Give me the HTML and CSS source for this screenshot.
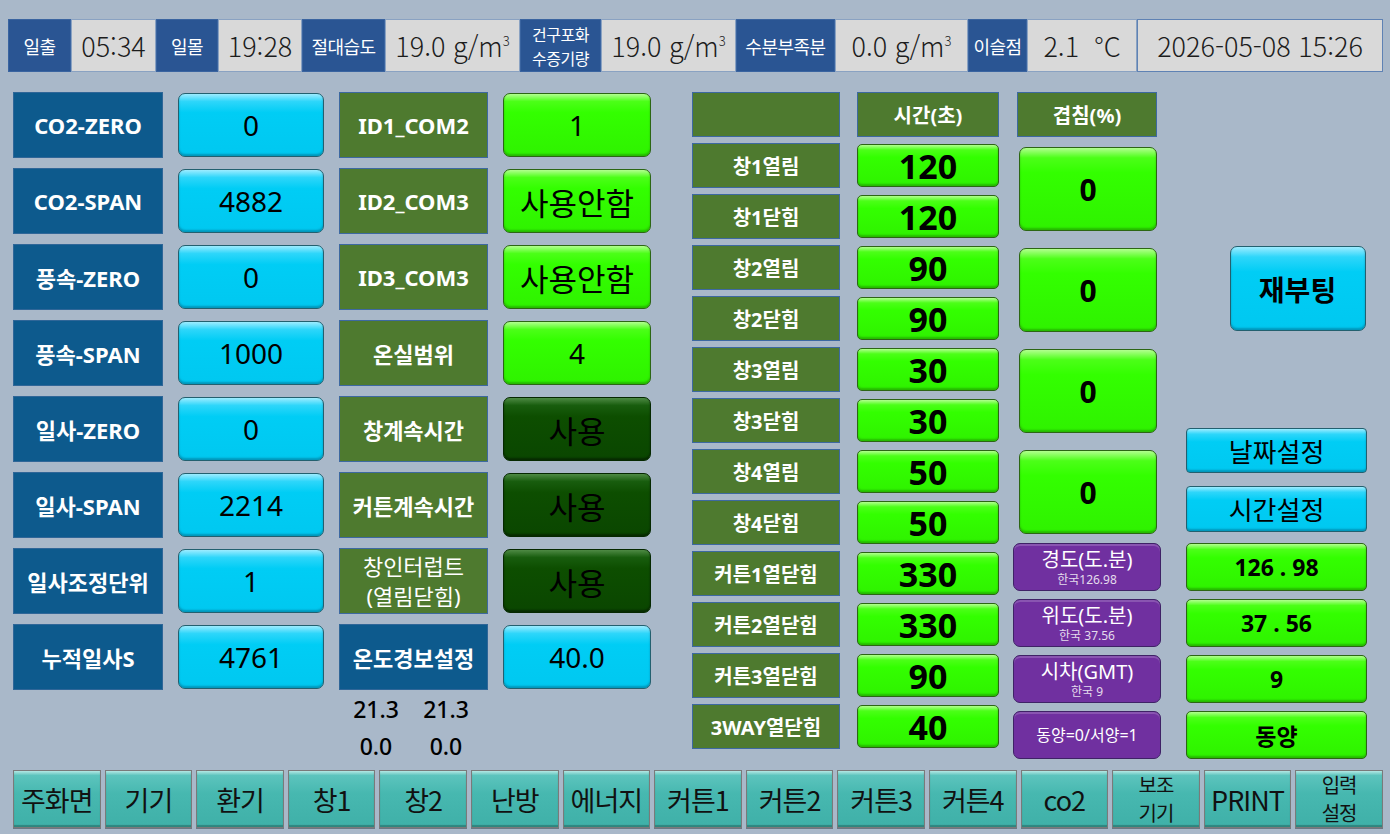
FILE: index.html
```html
<!DOCTYPE html>
<html lang="ko">
<head>
    <meta charset="UTF-8">
    <meta name="viewport" content="width=device-width, initial-scale=1.0">
    <title>환경 설정</title>
    <link rel="stylesheet" href="styles.css">
</head>
<body>
    <!-- 상단 기상 정보 표시줄 -->
    <div class="status-bar">
        <div class="st-label">일출</div>
        <div class="st-value">05:34</div>
        <div class="st-label">일몰</div>
        <div class="st-value">19:28</div>
        <div class="st-label">절대습도</div>
        <div class="st-value">19.0 g/m<sup>3</sup></div>
        <div class="st-label st-two">건구포화<br>수증기량</div>
        <div class="st-value">19.0 g/m<sup>3</sup></div>
        <div class="st-label">수분부족분</div>
        <div class="st-value">0.0 g/m<sup>3</sup></div>
        <div class="st-label">이슬점</div>
        <div class="st-value">2.1 &nbsp;°C</div>
        <div class="st-value st-clock">2026-05-08 15:26</div>
    </div>

    <div class="main">
        <!-- 센서 보정 / 통신 설정 -->
        <div class="setup">
            <div class="setup-grid">
                <div class="tag tag-blue">CO2-ZERO</div>
                <div class="btn btn-cyan">0</div>
                <div class="tag tag-green">ID1_COM2</div>
                <div class="btn btn-green">1</div>

                <div class="tag tag-blue">CO2-SPAN</div>
                <div class="btn btn-cyan">4882</div>
                <div class="tag tag-green">ID2_COM3</div>
                <div class="btn btn-green btn-word">사용안함</div>

                <div class="tag tag-blue">풍속-ZERO</div>
                <div class="btn btn-cyan">0</div>
                <div class="tag tag-green">ID3_COM3</div>
                <div class="btn btn-green btn-word">사용안함</div>

                <div class="tag tag-blue">풍속-SPAN</div>
                <div class="btn btn-cyan">1000</div>
                <div class="tag tag-green">온실범위</div>
                <div class="btn btn-green">4</div>

                <div class="tag tag-blue">일사-ZERO</div>
                <div class="btn btn-cyan">0</div>
                <div class="tag tag-green">창계속시간</div>
                <div class="btn btn-dark btn-word">사용</div>

                <div class="tag tag-blue">일사-SPAN</div>
                <div class="btn btn-cyan">2214</div>
                <div class="tag tag-green">커튼계속시간</div>
                <div class="btn btn-dark btn-word">사용</div>

                <div class="tag tag-blue">일사조정단위</div>
                <div class="btn btn-cyan">1</div>
                <div class="tag tag-green tag-two">창인터럽트<br>(열림닫힘)</div>
                <div class="btn btn-dark btn-word">사용</div>

                <div class="tag tag-blue">누적일사S</div>
                <div class="btn btn-cyan">4761</div>
                <div class="tag tag-blue">온도경보설정</div>
                <div class="btn btn-cyan">40.0</div>
            </div>
            <div class="readings">
                <span>21.3</span><span>21.3</span>
                <span>0.0</span><span>0.0</span>
            </div>
        </div>

        <!-- 창 / 커튼 구동 시간 -->
        <div class="timing-grid">
            <div class="tag tag-green tag-small"></div>
            <div class="tag tag-green tag-small">시간(초)</div>

            <div class="tag tag-green tag-small">창1열림</div>
            <div class="btn btn-green time-val">120</div>
            <div class="tag tag-green tag-small">창1닫힘</div>
            <div class="btn btn-green time-val">120</div>
            <div class="tag tag-green tag-small">창2열림</div>
            <div class="btn btn-green time-val">90</div>
            <div class="tag tag-green tag-small">창2닫힘</div>
            <div class="btn btn-green time-val">90</div>
            <div class="tag tag-green tag-small">창3열림</div>
            <div class="btn btn-green time-val">30</div>
            <div class="tag tag-green tag-small">창3닫힘</div>
            <div class="btn btn-green time-val">30</div>
            <div class="tag tag-green tag-small">창4열림</div>
            <div class="btn btn-green time-val">50</div>
            <div class="tag tag-green tag-small">창4닫힘</div>
            <div class="btn btn-green time-val">50</div>
            <div class="tag tag-green tag-small">커튼1열닫힘</div>
            <div class="btn btn-green time-val">330</div>
            <div class="tag tag-green tag-small">커튼2열닫힘</div>
            <div class="btn btn-green time-val">330</div>
            <div class="tag tag-green tag-small">커튼3열닫힘</div>
            <div class="btn btn-green time-val">90</div>
            <div class="tag tag-green tag-small">3WAY열닫힘</div>
            <div class="btn btn-green time-val">40</div>
        </div>

        <div class="side">
            <div class="side-top">
                <div class="overlap">
                    <div class="tag tag-green tag-small overlap-head">겹침(%)</div>
                    <div class="btn btn-green overlap-val">0</div>
                    <div class="btn btn-green overlap-val">0</div>
                    <div class="btn btn-green overlap-val">0</div>
                    <div class="btn btn-green overlap-val">0</div>
                </div>
                <div class="system">
                    <div class="btn btn-cyan reboot">재부팅</div>
                    <div class="btn btn-cyan set-btn date-btn">날짜설정</div>
                    <div class="btn btn-cyan set-btn time-btn">시간설정</div>
                </div>
            </div>

            <!-- 위치 / 시간대 -->
            <div class="geo">
                <div class="geo-tag"><span>경도(도.분)</span><small>한국126.98</small></div>
                <div class="btn btn-green geo-val">126 . 98</div>
                <div class="geo-tag"><span>위도(도.분)</span><small>한국 37.56</small></div>
                <div class="btn btn-green geo-val">37 . 56</div>
                <div class="geo-tag"><span>시차(GMT)</span><small>한국 9</small></div>
                <div class="btn btn-green geo-val">9</div>
                <div class="geo-tag geo-one">동양=0/서양=1</div>
                <div class="btn btn-green geo-val">동양</div>
            </div>
        </div>
    </div>

    <!-- 하단 화면 이동 메뉴 -->
    <div class="nav">
        <div class="nav-btn">주화면</div>
        <div class="nav-btn">기기</div>
        <div class="nav-btn">환기</div>
        <div class="nav-btn">창1</div>
        <div class="nav-btn">창2</div>
        <div class="nav-btn">난방</div>
        <div class="nav-btn">에너지</div>
        <div class="nav-btn">커튼1</div>
        <div class="nav-btn">커튼2</div>
        <div class="nav-btn">커튼3</div>
        <div class="nav-btn">커튼4</div>
        <div class="nav-btn">co2</div>
        <div class="nav-btn nav-two">보조<br>기기</div>
        <div class="nav-btn">PRINT</div>
        <div class="nav-btn nav-two">입력<br>설정</div>
    </div>
</body>
</html>
```

FILE: styles.css
```css
* {
    box-sizing: border-box;
}

body {
    margin: 0;
    width: 1390px;
    height: 834px;
    overflow: hidden;
    display: flex;
    flex-direction: column;
    background: #a9b8c9;
    font-family: "Noto Sans", "Noto Sans CJK KR", sans-serif;
    color: #000;
}

/* status bar */
.status-bar {
    display: grid;
    grid-template-columns: 63px 85px 62px 84px 83px 135px 81px 135px 99px 133px 59px 110px 246px;
    height: 53px;
    margin: 19px 0 0 8px;
    width: 1375px;
}

.st-label {
    display: flex;
    align-items: center;
    justify-content: center;
    background: #2a5593;
    border: 1px solid #3a64a0;
    color: #fff;
    font-family: "Noto Sans CJK KR", sans-serif;
    font-size: 18px;
    letter-spacing: -0.5px;
    white-space: nowrap;
}

.st-two {
    font-size: 16px;
    line-height: 24px;
    text-align: center;
}

.st-value {
    display: flex;
    align-items: center;
    justify-content: center;
    background: #d9d9d9;
    border: 1px solid #8aa2c2;
    color: #1c1c1c;
    font-family: "Noto Sans CJK KR", sans-serif;
    font-weight: 300;
    font-size: 27px;
    white-space: nowrap;
}

.st-value sup {
    font-size: 13px;
    align-self: flex-start;
    margin-top: 11px;
}

.st-clock {
    border-color: #5f82b4;
}

/* main area */
.main {
    display: flex;
    align-items: flex-start;
    margin: 20px 0 0 13px;
}

.setup-grid {
    display: grid;
    grid-template-columns: 150px 146px 149px 148px;
    grid-auto-rows: 66px;
    column-gap: 15px;
    row-gap: 10px;
}

.tag {
    display: flex;
    align-items: center;
    justify-content: center;
    color: #fff;
    font-weight: 700;
    font-size: 22px;
    border: 1px solid #3d69a0;
    white-space: nowrap;
}

.tag-blue {
    background: #0d5a8d;
    border-color: #2f6698;
}

.tag-green {
    background: #4e7a2f;
}

.tag-two {
    font-weight: 400;
    line-height: 30px;
    text-align: center;
}

.tag-small {
    font-size: 20px;
}

.btn {
    display: flex;
    align-items: center;
    justify-content: center;
    align-self: center;
    height: 64px;
    border-radius: 7px;
    font-size: 28px;
    white-space: nowrap;
}

.btn-cyan {
    background: linear-gradient(#9decff 0%, #2ed6fa 12%, #00cdf5 30%, #00c8f0 100%);
    border: 1px solid #23606f;
    box-shadow: inset 0 -2px 2px rgba(0, 60, 90, 0.35);
}

.btn-green {
    background: linear-gradient(#b2ff8f 0%, #4cff18 12%, #33ff00 30%, #2ff200 100%);
    border: 1px solid #2c6614;
    box-shadow: inset 0 -2px 2px rgba(20, 80, 0, 0.35);
}

.btn-dark {
    background: linear-gradient(#4e8a44 0%, #185d0e 12%, #0d4e00 30%, #0a4600 100%);
    border: 1px solid #052800;
    box-shadow: inset 0 -2px 2px rgba(0, 0, 0, 0.4);
}

.btn-word {
    font-size: 31px;
}

.readings {
    display: grid;
    grid-template-columns: 70px 70px;
    grid-auto-rows: 37px;
    justify-items: center;
    align-items: center;
    margin-left: 328px;
    font-size: 23px;
    font-weight: 500;
}

/* window / curtain timing */
.timing-grid {
    display: grid;
    grid-template-columns: 148px 142px;
    grid-auto-rows: 45px;
    column-gap: 17px;
    row-gap: 6px;
    margin-left: 41px;
}

.time-val {
    height: 43px;
    border-radius: 5px;
    font-size: 34px;
    font-weight: 700;
}

/* overlap, system buttons, location */
.side {
    display: flex;
    flex-direction: column;
    margin-left: 14px;
    width: 354px;
}

.side-top {
    display: flex;
    gap: 25px;
}

.overlap {
    display: flex;
    flex-direction: column;
    width: 148px;
    gap: 17px;
}

.overlap-head {
    height: 45px;
    width: 140px;
    margin: 0 0 -7px 4px;
}

.overlap-val {
    height: 84px;
    width: 138px;
    margin-left: 2px;
    font-size: 30px;
    font-weight: 700;
}

.system {
    display: flex;
    flex-direction: column;
    width: 181px;
}

.reboot {
    height: 85px;
    width: 136px;
    margin: 154px 0 0 42px;
    font-size: 28px;
    font-weight: 700;
}

.set-btn {
    align-self: stretch;
    height: 45px;
    border-radius: 4px;
    font-size: 26px;
}

.date-btn {
    margin-top: 97px;
}

.time-btn {
    margin-top: 13px;
    height: 46px;
}

.geo {
    display: grid;
    grid-template-columns: 148px 181px;
    grid-auto-rows: 48px;
    column-gap: 25px;
    row-gap: 8px;
    margin-top: 9px;
}

.geo-tag {
    display: flex;
    flex-direction: column;
    align-items: center;
    justify-content: center;
    background: #7030a0;
    border: 1px solid #3f2266;
    border-radius: 7px;
    box-shadow: inset 0 2px 0 rgba(255, 255, 255, 0.18);
    color: #fff;
    font-size: 20px;
    line-height: 24px;
}

.geo-tag small {
    font-size: 12px;
    line-height: 15px;
    color: #e4dcec;
}

.geo-one {
    font-size: 16px;
}

.geo-val {
    height: 48px;
    border-radius: 5px;
    font-size: 23px;
    font-weight: 700;
}

/* bottom navigation */
.nav {
    display: flex;
    gap: 4px;
    margin: auto 7px 6px 13px;
    height: 58px;
}

.nav-btn {
    flex: 1;
    display: flex;
    align-items: center;
    justify-content: center;
    background: linear-gradient(#b4e8e4 0%, #5cc4bd 8%, #47b8b0 40%, #3fb0a8 100%);
    border: 1px solid #7a7a7a;
    box-shadow: inset 0 -2px 1px rgba(0, 0, 0, 0.25), 0 1px 0 #6b7785;
    font-family: "Noto Sans CJK KR", sans-serif;
    font-size: 27px;
    letter-spacing: -1px;
    color: #111;
    white-space: nowrap;
}

.nav-two {
    font-size: 20px;
    line-height: 28px;
    text-align: center;
}
```
